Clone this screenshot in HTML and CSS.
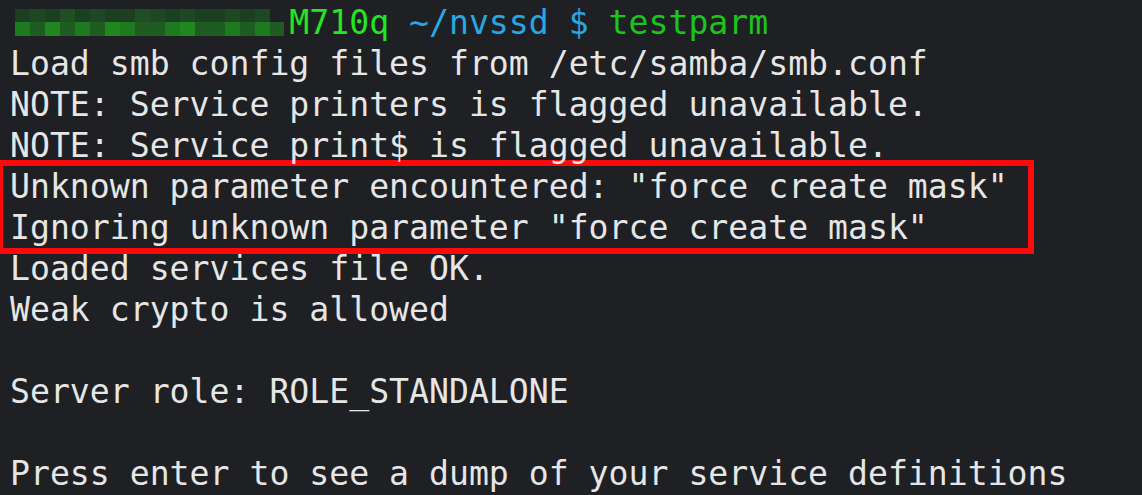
FILE: index.html
```html
<!DOCTYPE html>
<html>
<head>
<meta charset="utf-8">
<link rel="stylesheet" href="styles.css">
</head>
<body>
<div class="term">
  <div class="line prompt-line"><span class="host"><span class="hidden">aaaaaaaaaaaaa-</span>M710q</span> <span class="path">~/nvssd $</span> <span class="cmd">testparm</span><div class="mosaic"><div class="row top"><i class="c1"></i><i class="c2"></i><i class="c1"></i><i class="c3"></i><i class="c1"></i><i class="c2"></i><i class="c1"></i><i class="c1"></i><i class="c3"></i><i class="c2"></i><i class="c1"></i><i class="c2"></i><i class="c1"></i><i class="c1"></i><i class="c2"></i><i class="c1"></i><i class="c2"></i></div><div class="row bottom"><i class="d1"></i><i class="d2"></i><i class="d3"></i><i class="d2"></i><i class="d1"></i><i class="d2"></i><i class="d3"></i><i class="d1"></i><i class="d2"></i><i class="d2"></i><i class="d1"></i><i class="d3"></i><i class="d2"></i><i class="d2"></i><i class="d1"></i><i class="d2"></i><i class="d1"></i><i class="d2 last"></i></div><div class="drip"></div></div></div>
  <div class="line">Load smb config files from /etc/samba/smb.conf</div>
  <div class="line">NOTE: Service printers is flagged unavailable.</div>
  <div class="line">NOTE: Service print$ is flagged unavailable.</div>
  <div class="highlight">
    <div class="line">Unknown parameter encountered: "force create mask"</div>
    <div class="line">Ignoring unknown parameter "force create mask"</div>
  </div>
  <div class="line">Loaded services file OK.</div>
  <div class="line">Weak crypto is allowed</div>
  <div class="line">&nbsp;</div>
  <div class="line">Server role: ROLE_STANDALONE</div>
  <div class="line">&nbsp;</div>
  <div class="line">Press enter to see a dump of your service definitions</div>
</div>
</body>
</html>
```

FILE: styles.css
```css
html, body {
  margin: 0;
  padding: 0;
  background: #1e2024;
  overflow: hidden;
}
.term {
  padding: 2px 0 0 10px;
  font-family: "DejaVu Sans Mono", "Liberation Mono", monospace;
  font-size: 33.15px;
  line-height: 41px;
  color: #e6e6e6;
}
.line {
  white-space: pre;
  height: 41px;
}
.prompt-line {
  position: relative;
}
.host {
  color: #22e622;
}
.hidden {
  color: transparent;
}
.path {
  color: #28a8e0;
}
.cmd {
  color: #1cc41c;
}
.mosaic {
  position: absolute;
  left: 5px;
  top: 7px;
  width: 270px;
  height: 40px;
}
.row {
  display: flex;
}
.row.top {
  height: 13px;
}
.row.bottom {
  height: 14px;
}
.row i {
  display: block;
  width: 15px;
  height: 100%;
}
.row.top i.c1 { background: #1c3f21; }
.row.top i.c2 { background: #1e4723; }
.row.top i.c3 { background: #1f5024; }
.row.bottom i.d1 { background: #1d7a1e; }
.row.bottom i.d2 { background: #1f5c22; }
.row.bottom i.d3 { background: #20881f; }
.row.bottom i.last { width: 14px; }
.drip {
  position: absolute;
  left: 130px;
  top: 0;
  width: 15px;
  height: 36px;
  background: #1f6a20;
  opacity: 0.75;
  z-index: -1;
}
.highlight {
  border: 6px solid #ff0a0a;
  margin: -6px 0 -6px -13px;
  padding-left: 7px;
  width: 1037px;
  box-sizing: border-box;
}
```
